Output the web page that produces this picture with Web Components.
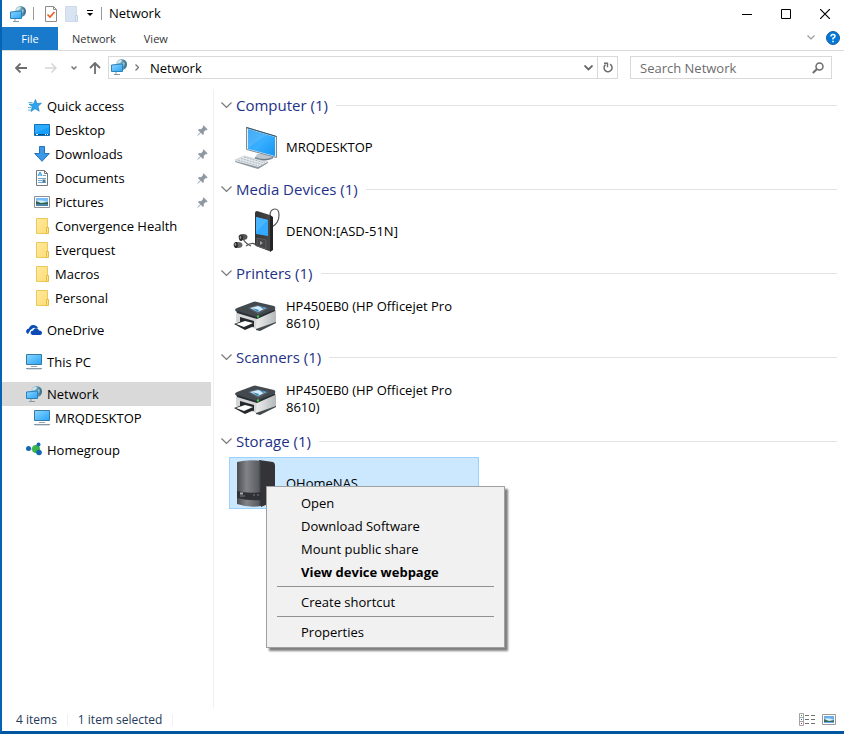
<!DOCTYPE html>
<html lang="en">
<head>
<meta charset="utf-8">
<title>Network</title>
<style>
    body {
        margin: 0;
        font-family: "Open Sans", "Noto Sans", sans-serif;
        font-size: 13px;
        color: #000;
    }
</style>
</head>
<body>
<explorer-window>
    <title-bar slot="title">Network</title-bar>
    <ribbon-tabs slot="title"></ribbon-tabs>
    <address-bar slot="title" location="Network"></address-bar>

    <nav-item slot="nav" icon="star">Quick access</nav-item>
    <nav-item slot="nav" icon="desktop" child pinned>Desktop</nav-item>
    <nav-item slot="nav" icon="download" child pinned>Downloads</nav-item>
    <nav-item slot="nav" icon="document" child pinned>Documents</nav-item>
    <nav-item slot="nav" icon="picture" child pinned>Pictures</nav-item>
    <nav-item slot="nav" icon="folder" child>Convergence Health</nav-item>
    <nav-item slot="nav" icon="folder" child>Everquest</nav-item>
    <nav-item slot="nav" icon="folder" child>Macros</nav-item>
    <nav-item slot="nav" icon="folder" child>Personal</nav-item>
    <nav-item slot="nav" icon="cloud" spaced>OneDrive</nav-item>
    <nav-item slot="nav" icon="pc" spaced>This PC</nav-item>
    <nav-item slot="nav" icon="network" spaced selected>Network</nav-item>
    <nav-item slot="nav" icon="pc" child>MRQDESKTOP</nav-item>
    <nav-item slot="nav" icon="homegroup" spaced>Homegroup</nav-item>

    <device-group heading="Computer (1)">
        <device-item icon="computer">MRQDESKTOP</device-item>
    </device-group>
    <device-group heading="Media Devices (1)">
        <device-item icon="player">DENON:[ASD-51N]</device-item>
    </device-group>
    <device-group heading="Printers (1)">
        <device-item icon="printer">HP450EB0 (HP Officejet Pro 8610)</device-item>
    </device-group>
    <device-group heading="Scanners (1)">
        <device-item icon="printer">HP450EB0 (HP Officejet Pro 8610)</device-item>
    </device-group>
    <device-group heading="Storage (1)">
        <device-item icon="nas" selected>QHomeNAS
            <context-menu slot="menu"></context-menu>
        </device-item>
    </device-group>

    <status-bar slot="status"></status-bar>
</explorer-window>

<script>
// each icon: [width, height, markup]
const icons = {
    network: [16, 16, `
        <defs><linearGradient id="a" x2="1" y2="1"><stop stop-color="#8fd5ff"/><stop offset="1" stop-color="#2ba4f5"/></linearGradient>
        <linearGradient id="b" x2="1"><stop stop-color="#b4d3de"/><stop offset=".45" stop-color="#7aa9bf"/><stop offset="1" stop-color="#2f6685"/></linearGradient></defs>
        <circle cx="10.500" cy="5.500" r="5.500" fill="url(#b)"/>
        <path d="M7 2l3-1.500 1 1.500-2 2-3 0z" fill="#cfe6ec"/><path d="M12 3l2 1-1 3-2-1z" fill="#8fbfce"/>
        <path d="M.5 6l11-1v7.500H.5z" fill="url(#a)" stroke="#2a83b8"/>
        <path d="M5 13v2" stroke="#8498a6"/><path d="M3 15.500h6" stroke="#8498a6"/>`],
    star: [16, 16, `
        <path d="M9.500 1.500l1.400 4 4.600-.3-3.500 3.100 1.200 4.900-4.200-2.500-4 2.800 1.300-4.800L3 6.200l4.500-.3z" fill="#2ea6ef" stroke="#1677ba" stroke-width=".6"/>
        <path d="M2.500 4.500h4M2 9.500h3.500M2 12h3" stroke="#5fb4e4"/>`],
    desktop: [16, 16, `
        <path d="M.5 2.500h15v11h-15z" fill="#16a0fb" stroke="#1172b5"/>
        <path d="M1 3h14v2L1 11z" fill="#2dacff"/>
        <path d="M1 12.500h14" stroke="#095184"/><path d="M2 12.500h2m7 0h1m1 0h1" stroke="#fff"/>`],
    download: [16, 16, `
        <path d="M5.500.5h5v7h4.800L8 15.300.7 7.500h4.800z" fill="#3b99e8" stroke="#2672b8"/>`],
    document: [16, 16, `
        <path d="M2.500.5h8l3 3v12h-11z" fill="#fff" stroke="#75797d"/><path d="M10.500.5v3h3" fill="none" stroke="#75797d"/>
        <path d="M4 6l2-4 2 4M5 5h2" fill="none" stroke="#2694d8"/>
        <path d="M9 5.500h3M4 8.500h8M4 10.500h4M4 12.500h8" stroke="#6ca7cb"/><path d="M8.500 9.500h3v3h-3z" fill="#4a7799"/>`],
    picture: [16, 16, `
        <path d="M.5 2.500h15v11h-15z" fill="#fff" stroke="#8b8f93"/>
        <path d="M2 4h12v8H2z" fill="#78bdf5"/><path d="M2 7q4-2 12 1v1H2z" fill="#d6edf7"/><path d="M2 7l5 2 7-1v2H2z" fill="#315f50"/><path d="M2 10h12v2H2z" fill="#4b83a7"/>`],
    folder: [16, 16, `
        <defs><linearGradient id="a" x2="1" y2="1"><stop stop-color="#ffeaa0"/><stop offset="1" stop-color="#ffdc75"/></linearGradient></defs>
        <path d="M2.500.5h11v15h-11z" fill="url(#a)" stroke="#edc958"/>
        <path d="M12.500 9.500h2v6h-2z" fill="#ffe895" stroke="#e3bb3e"/>`],
    cloud: [16, 16, `
        <path d="M2 12Q-.5 11 .3 8.500 1 6.500 3 6.500 4 2.500 8 3q3 .3 4 3l-2 .5Q8 5 6 7q-2 .5-2.500 2.500z" fill="#0b4bb3"/>
        <path d="M6.500 13Q4 12 4.800 10q.5-1.500 2.200-1.300Q7.600 6 10 6.200q2.200 0 3 2.300Q16 8.400 16 11q0 2-2 2z" fill="#0b4bb3"/>`],
    pc: [16, 16, `
        <defs><linearGradient id="a" x2="1" y2="1"><stop stop-color="#8bd6ff"/><stop offset="1" stop-color="#27a4fb"/></linearGradient></defs>
        <path d="M.5.5h15v10h-15z" fill="url(#a)" stroke="#397aa3"/>
        <path d="M5 12.500h6" stroke="#95a5b1"/><path d="M0 14.500h16" stroke="#8799a6"/><path d="M1 15.500h14" stroke="#d6dde2"/>`],
    homegroup: [16, 16, `
        <path d="M4 7h5l3-5M10 8l3 4" stroke="#84a9bd" fill="none"/><circle cx="10" cy="7" r="4" fill="#39b54a"/>
        <circle cx="2.500" cy="6.500" r="2.500" fill="#1665b0"/><circle cx="12.500" cy="2.500" r="2" fill="#1665b0"/><circle cx="13" cy="10.500" r="2.800" fill="#1665b0"/>`],
    pin: [11, 11, `
        <path d="M6.500.3l4.200 4.200-1.200.7-.8-.2-2 2 .2 2-1 1-2.200-2.200L.8 10.700l-.5-.5L3.200 7.300 1 5l1-1 2 .3 2-2-.2-.8z" fill="#8e99a3"/>`],
    computer: [48, 48, `
        <defs><linearGradient id="a" x2="1" y2="1"><stop stop-color="#2b9df4"/><stop offset=".5" stop-color="#38afff"/><stop offset="1" stop-color="#1595f4"/></linearGradient></defs>
        <path d="M25 31l8-1 2 2 7 1-1 3q-8 3-18-1l1-2z" fill="#bdc7cf"/><path d="M23 34q9 4 18 0v1q-9 5-18 1z" fill="#6e7e89"/>
        <path d="M14.500 4.500l30 9v21l-30-8z" fill="#e7edf1" stroke="#7b8c98"/>
        <path d="M16 6l27 8v19l-27-7z" fill="url(#a)"/><path d="M16 6l19 6-19 13z" fill="#fff" opacity=".12"/><path d="M14.500 4.500l30 9" stroke="#30556d"/>
        <path d="M3 37l9-4 24 6-10 6z" fill="#e5e9ed" stroke="#c0c6cb" stroke-width=".6"/>
        <path d="M6 37l21 6M9 35.500l21 6M12 34l21 6" stroke="#b0b8bf" stroke-dasharray="2 1"/><path d="M3 38l23 6 10-5v1l-10 6L3 39z" fill="#8d98a1"/>`],
    player: [48, 48, `
        <defs><linearGradient id="a" x2="1"><stop stop-color="#333334"/><stop offset="1" stop-color="#4b4b4c"/></linearGradient></defs>
        <path d="M38 9q0-7 5-7 4 0 4 6 0 8-7 12M14 39q7-5 11 0M11 32q3 5 8 7" fill="none" stroke="#555" stroke-width="1.200"/>
        <path d="M23 6q0-2 2-2l13 4q2 1 2 3v31q0 3-3 2l-13-5q-1-1-1-3z" fill="url(#a)"/>
        <path d="M38 8l3 2v33l-3 2z" fill="#242425"/>
        <path d="M24 10l12 3v16l-12-2z" fill="#33a9ff"/><path d="M24 10l12 3-12 12z" fill="#4ab5ff"/>
        <path d="M25 31l9 2v9l-9-3z" fill="#464648" stroke="#5c5c5e"/><path d="M28 34l3 2-3 2z" fill="#a0a0a2"/>
        <ellipse cx="11" cy="30" rx="4.500" ry="3" fill="#555"/><ellipse cx="9" cy="31" rx="2" ry="3" fill="#2b2b2b"/><ellipse cx="8.500" cy="30.500" rx=".8" ry="1.400" fill="#999"/>
        <ellipse cx="6" cy="38" rx="4.500" ry="3" fill="#666"/><ellipse cx="4" cy="38" rx="1.800" ry="3" fill="#222"/><ellipse cx="3.500" cy="37.500" rx=".8" ry="1.400" fill="#999"/>`],
    printer: [48, 48, `
        <defs><linearGradient id="a" x2="1"><stop stop-color="#eee"/><stop offset="1" stop-color="#b4b8bb"/></linearGradient></defs>
        <path d="M4 21l2-2 21 6v12l-3 1L4 31z" fill="#d4d6d8"/>
        <path d="M25 26l18-8 1 2v12L27 39l-3-1z" fill="url(#a)"/>
        <path d="M5 17L21 11q2-1 4 0l17 4q2 1 1 3L28 26q-2 1-5 0L5 21q-2-1-2-2 0-1 2-2z" fill="#42494f"/>
        <path d="M5 20l20 6 18-8v2l-18 8-20-6z" fill="#282e33"/>
        <path d="M16 17l9-3 12 3-11 6z" fill="#59646e"/><path d="M18 17l8-2 8 2-8 4z" fill="#d4ecfa"/><path d="M20 17l7 2-1 2zM27 15l7 2-3 1z" fill="#328bc7"/>
        <path d="M8 26l14 4v6l-14-3z" fill="#24292d"/>
        <path d="M2 33l11-4 9 3v3l-9 4z" fill="#24292d"/><path d="M4 33l9-3 8 2-9 4z" fill="#fff"/>
        <path d="M24 38l20-7v1l-16 8-4-1z" fill="#42484c"/><circle cx="26" cy="25.500" r="1.200" fill="#45c84c"/>`],
    nas: [48, 48, `
        <defs><linearGradient id="a" x2="1"><stop stop-color="#4b4c50"/><stop offset=".4" stop-color="#828388"/><stop offset=".9" stop-color="#5b5c62"/><stop offset="1" stop-color="#333438"/></linearGradient></defs>
        <path d="M27 1l14 2q2 1 2 3v36l-14 6z" fill="#343438"/>
        <path d="M5 3q12-3 24-1v45q-12 2-24-2z" fill="url(#a)"/>
        <path d="M5 32q12 3 24 1v8q-12 1-24-2z" fill="#303136"/><path d="M8 37h5M21 36h2m2 0h2" stroke="#777981"/>
        <path d="M8 34.500h3" stroke="#aeb0b5" stroke-width="2"/>`],
    check: [12, 16, `
        <path d="M.5.5h8l3 3v12H.5z" fill="#fff" stroke="#8b8b8b"/><path d="M8.500.5v3h3" fill="none" stroke="#8b8b8b"/>
        <path d="M2.500 8.500L5 11l4.500-5" fill="none" stroke="#ed5a1d" stroke-width="1.600"/>`],
    blank: [13, 16, `
        <path d="M.5.500h11v15H.5z" fill="#d9e4f3" stroke="#cfdbed"/><path d="M10.500 9.500h2v6h-2z" fill="#e5edf8" stroke="#c1d1e7"/>`],
    customize: [8, 7, `<path d="M1 .500h6" stroke="#000"/><path d="M1 3h6L4 6z" fill="#000"/>`],
    minimize: [10, 10, `<path d="M0 5.500h10" stroke="#000"/>`],
    maximize: [10, 10, `<path d="M.5.5h9v9h-9z" fill="none" stroke="#000"/>`],
    close: [10, 10, `<path d="M0 0l10 10M10 0L0 10" stroke="#000" stroke-width="1.200"/>`],
    expand: [8, 5, `<path d="M.5.5L4 4 7.500.5" fill="none" stroke="#999" stroke-width="1.200"/>`],
    help: [14, 14, `<circle cx="7" cy="7" r="6.500" fill="#0078d7" stroke="#1b62a5"/>
        <path d="M5 5.500Q5 3.500 7 3.500t2 1.700Q9 6.300 7 7.200V8.500" fill="none" stroke="#fff" stroke-width="1.500"/><path d="M6.200 9.700h1.600v1.600H6.200z" fill="#fff"/>`],
    back: [12, 10, `<path d="M12 5H1M5.500.5L1 5l4.500 4.500" fill="none" stroke="#6d6d6d" stroke-width="1.800"/>`],
    forward: [12, 10, `<path d="M0 5h11M6.500.5L11 5 6.500 9.500" fill="none" stroke="#d6d6d6" stroke-width="1.500"/>`],
    recent: [6, 4, `<path d="M.5.5L3 3 5.500.5" fill="none" stroke="#777" stroke-width="1.500"/>`],
    up: [12, 12, `<path d="M6 12V1M1 6l5-5 5 5" fill="none" stroke="#6d6d6d" stroke-width="1.800"/>`],
    crumb: [4, 7, `<path d="M.5.500l3 3-3 3" fill="none" stroke="#777" stroke-width="1.300"/>`],
    drop: [9, 6, `<path d="M.5.500l4 4 4-4" fill="none" stroke="#666" stroke-width="1.800"/>`],
    refresh: [10, 11, `<path d="M7 2.200a4 4 0 1 1-4.500.4" fill="none" stroke="#6d6d6d" stroke-width="1.500"/><path d="M1 1.200h3.500v4" fill="none" stroke="#6d6d6d" stroke-width="1.400"/>`],
    search: [12, 12, `<circle cx="7.500" cy="4.500" r="3.500" fill="none" stroke="#6d6d6d" stroke-width="1.500"/><path d="M5 7L.8 11" stroke="#6d6d6d" stroke-width="2"/>`],
    chevron: [11, 7, `<path d="M.5.500l5 5 5-5" fill="none" stroke="#777" stroke-width="1.200"/>`],
    details: [16, 13, `<path d="M.5.5h4v12h-4zM.5 4.500h4M.5 8.500h4" fill="none" stroke="#a3a3a3"/><path d="M6 2.500h4m2 0h4M6 6.500h4m2 0h4M6 10.500h4m2 0h4" stroke="#707070"/>
        <path d="M2 2h1v1H2z" fill="#3a7c4b"/><path d="M2 6h1v1H2z" fill="#2c6cd0"/><path d="M2 10h1v1H2z" fill="#d02437"/>`],
    tiles: [14, 11, `<path d="M.5.5h13v10H.5z" fill="#fff" stroke="#999"/><path d="M2 2h10v7H2z" fill="#69aee8"/><path d="M2 5q5-2 10 1v1H2z" fill="#dbeef8"/><path d="M2 5l5 2 5-1v2H2z" fill="#3c6960"/>`]
};

function attach(el, html) {
    el.attachShadow({mode: "open"}).innerHTML = html;
}

class ShellIcon extends HTMLElement {
    connectedCallback() {
        if (this.shadowRoot) return;
        const [w, h, art] = icons[this.getAttribute("name")];
        attach(this, `
            <style>:host { display: block; flex: none; } svg { display: block; }</style>
            <svg width="${w}" height="${h}" viewBox="0 0 ${w} ${h}" aria-hidden="true">${art}</svg>`);
    }
}

class ExplorerWindow extends HTMLElement {
    connectedCallback() {
        attach(this, `
            <style>
                :host {
                    display: flex;
                    flex-direction: column;
                    box-sizing: border-box;
                    min-height: 100vh;
                    border-left: 2px solid #0563b1;
                    border-bottom: 3px solid #0056a0;
                    background: #fff;
                }
                .body { display: flex; flex: 1; padding-top: 10px; }
                nav {
                    flex: none;
                    box-sizing: border-box;
                    width: 212px;
                    padding: 5px 2px 0 0;
                    border-right: 1px solid #f0f0f0;
                }
                main { flex: 1; padding: 0 7px 0 7px; }
            </style>
            <header><slot name="title"></slot></header>
            <div class="body">
                <nav><slot name="nav"></slot></nav>
                <main><slot></slot></main>
            </div>
            <slot name="status"></slot>`);
    }
}

class TitleBar extends HTMLElement {
    connectedCallback() {
        attach(this, `
            <style>
                :host { display: flex; align-items: center; height: 27px; padding-left: 8px; }
                button { border: 0; padding: 0; background: none; }
                i { width: 1px; height: 13px; background: #999; }
                .tools { display: flex; align-items: center; gap: 8px; margin: 0 7px; }
                .check { margin-left: 3px; }
                .title { flex: 1; margin-left: 7px; line-height: 26px; align-self: start; }
                .controls { display: flex; }
                .controls button { display: flex; justify-content: center; align-items: center; width: 39px; height: 26px; }
            </style>
            <shell-icon name="network"></shell-icon>
            <div class="tools">
                <i></i>
                <button class="check" aria-label="Properties"><shell-icon name="check"></shell-icon></button>
                <button aria-label="New folder"><shell-icon name="blank"></shell-icon></button>
                <button aria-label="Customize toolbar"><shell-icon name="customize"></shell-icon></button>
            </div>
            <i></i>
            <span class="title"><slot></slot></span>
            <div class="controls">
                <button aria-label="Minimize"><shell-icon name="minimize"></shell-icon></button>
                <button aria-label="Maximize"><shell-icon name="maximize"></shell-icon></button>
                <button aria-label="Close"><shell-icon name="close"></shell-icon></button>
            </div>`);
    }
}

class RibbonTabs extends HTMLElement {
    connectedCallback() {
        attach(this, `
            <style>
                :host { display: flex; align-items: center; height: 23px; border-bottom: 1px solid #dadbdc; }
                button { height: 23px; border: 0; padding: 0 14px; background: none; font: inherit; font-size: 11px; color: #333; }
                .file { width: 56px; background: #1979ca; color: #fff; }
                .end { display: flex; align-items: center; gap: 11px; margin-left: auto; padding: 0 4px 2px 0; }
                .end button { height: auto; padding: 0; }
            </style>
            <button class="file">File</button>
            <button>Network</button>
            <button>View</button>
            <div class="end">
                <button aria-label="Expand ribbon"><shell-icon name="expand"></shell-icon></button>
                <button aria-label="Help"><shell-icon name="help"></shell-icon></button>
            </div>`);
    }
}

class AddressBar extends HTMLElement {
    connectedCallback() {
        attach(this, `
            <style>
                :host { display: flex; align-items: center; padding: 5px 12px 0 13px; }
                button { display: flex; align-items: center; justify-content: center; border: 0; padding: 0; background: none; }
                .history { display: flex; align-items: center; margin-right: 7px; }
                .history button + button { margin-left: 18px; }
                .history button:nth-child(3) { margin-left: 14px; }
                .history button:nth-child(4) { margin-left: 12px; }
                .path, .search { display: flex; align-items: center; box-sizing: border-box; height: 23px; border: 1px solid #d9d9d9; }
                .path { flex: 1; gap: 8px; padding-left: 2px; }
                .path shell-icon[name="network"] { margin-bottom: 2px; }
                .path a { flex: 1; padding-left: 3px; color: inherit; text-decoration: none; }
                .refresh { width: 20px; height: 21px; border-left: 1px solid #d9d9d9; margin-left: -4px; }
                .search { flex: 0 1 202px; margin-left: 12px; padding: 0 7px 0 9px; }
                input { flex: 1; min-width: 0; border: 0; padding: 0; outline: 0; background: none; font: inherit; }
                input::placeholder { color: #6d6d6d; opacity: 1; }
            </style>
            <div class="history">
                <button aria-label="Back"><shell-icon name="back"></shell-icon></button>
                <button aria-label="Forward"><shell-icon name="forward"></shell-icon></button>
                <button aria-label="Recent locations"><shell-icon name="recent"></shell-icon></button>
                <button aria-label="Up"><shell-icon name="up"></shell-icon></button>
            </div>
            <div class="path">
                <shell-icon name="network"></shell-icon>
                <shell-icon name="crumb"></shell-icon>
                <a href="#">${this.getAttribute("location")}</a>
                <button aria-label="Previous locations"><shell-icon name="drop"></shell-icon></button>
                <button class="refresh" aria-label="Refresh"><shell-icon name="refresh"></shell-icon></button>
            </div>
            <div class="search">
                <input type="search" aria-label="Search Network" placeholder="Search Network">
                <button aria-label="Search"><shell-icon name="search"></shell-icon></button>
            </div>`);
    }
}

class NavItem extends HTMLElement {
    connectedCallback() {
        const pin = this.hasAttribute("pinned") ? `<shell-icon name="pin"></shell-icon>` : "";
        attach(this, `
            <style>
                :host { display: block; }
                :host([spaced]) { margin-top: 8px; }
                :host([selected]) { background: #d9d9d9; }
                a { display: flex; align-items: center; gap: 5px; height: 24px; padding: 0 3px 0 24px; color: inherit; text-decoration: none; }
                :host([child]) a { padding-left: 32px; }
                span { flex: 1; white-space: nowrap; }
            </style>
            <a href="#"><shell-icon name="${this.getAttribute("icon")}"></shell-icon><span><slot></slot></span>${pin}</a>`);
    }
}

class DeviceGroup extends HTMLElement {
    connectedCallback() {
        attach(this, `
            <style>
                :host { display: block; }
                h2 { display: flex; align-items: center; gap: 8px; height: 32px; margin: 0; font-size: 15px; font-weight: normal; color: #1e3287; }
                h2 button { border: 0; padding: 0; background: none; }
                h2 span { margin-left: -4px; }
                h2::after { content: ""; flex: 1; height: 1px; background: #e2e2e2; }
                .items { padding-left: 8px; }
            </style>
            <h2><button aria-label="Collapse group"><shell-icon name="chevron"></shell-icon></button><span>${this.getAttribute("heading")}</span></h2>
            <div class="items"><slot></slot></div>`);
    }
}

class DeviceItem extends HTMLElement {
    connectedCallback() {
        attach(this, `
            <style>
                :host {
                    display: flex;
                    align-items: center;
                    gap: 6px;
                    position: relative;
                    box-sizing: border-box;
                    width: 250px;
                    height: 52px;
                    padding: 0 20px 0 2px;
                    border: 1px solid transparent;
                    line-height: 17px;
                }
                :host([selected]) { background: #cce8ff; border-color: #99d1ff; }
            </style>
            <shell-icon name="${this.getAttribute("icon")}"></shell-icon>
            <span><slot></slot></span>
            <slot name="menu"></slot>`);
    }
}

class ContextMenu extends HTMLElement {
    connectedCallback() {
        attach(this, `
            <style>
                :host {
                    position: absolute;
                    left: 36px;
                    top: 28px;
                    z-index: 1;
                    box-sizing: border-box;
                    width: 239px;
                    padding: 5px 2px 3px;
                    border: 1px solid #a0a0a0;
                    background: #f1f1f1;
                    box-shadow: 3px 3px 2px rgba(0, 0, 0, .5);
                }
                button { display: block; width: 100%; height: 23px; border: 0; padding: 0 32px; background: none; font: inherit; text-align: left; color: #000; }
                .default { font-weight: bold; }
                hr { height: 1px; margin: 2px 8px 4px; border: 0; background: #919191; }
            </style>
            <button>Open</button>
            <button>Download Software</button>
            <button>Mount public share</button>
            <button class="default">View device webpage</button>
            <hr>
            <button>Create shortcut</button>
            <hr>
            <button>Properties</button>`);
    }
}

class StatusBar extends HTMLElement {
    connectedCallback() {
        attach(this, `
            <style>
                :host { display: flex; align-items: center; height: 23px; padding: 0 8px 0 4px; font-size: 12px; color: #1e395b; }
                span { padding: 0 10px; border-right: 1px solid #f0f0f0; line-height: 12px; }
                div { display: flex; align-items: center; gap: 7px; margin-left: auto; }
                button { border: 0; padding: 0; background: none; }
            </style>
            <span>4 items</span>
            <span>1 item selected</span>
            <div>
                <button aria-label="Details view"><shell-icon name="details"></shell-icon></button>
                <button aria-label="Large thumbnails"><shell-icon name="tiles"></shell-icon></button>
            </div>`);
    }
}

customElements.define("shell-icon", ShellIcon);
customElements.define("explorer-window", ExplorerWindow);
customElements.define("title-bar", TitleBar);
customElements.define("ribbon-tabs", RibbonTabs);
customElements.define("address-bar", AddressBar);
customElements.define("nav-item", NavItem);
customElements.define("device-group", DeviceGroup);
customElements.define("device-item", DeviceItem);
customElements.define("context-menu", ContextMenu);
customElements.define("status-bar", StatusBar);
</script>
</body>
</html>
